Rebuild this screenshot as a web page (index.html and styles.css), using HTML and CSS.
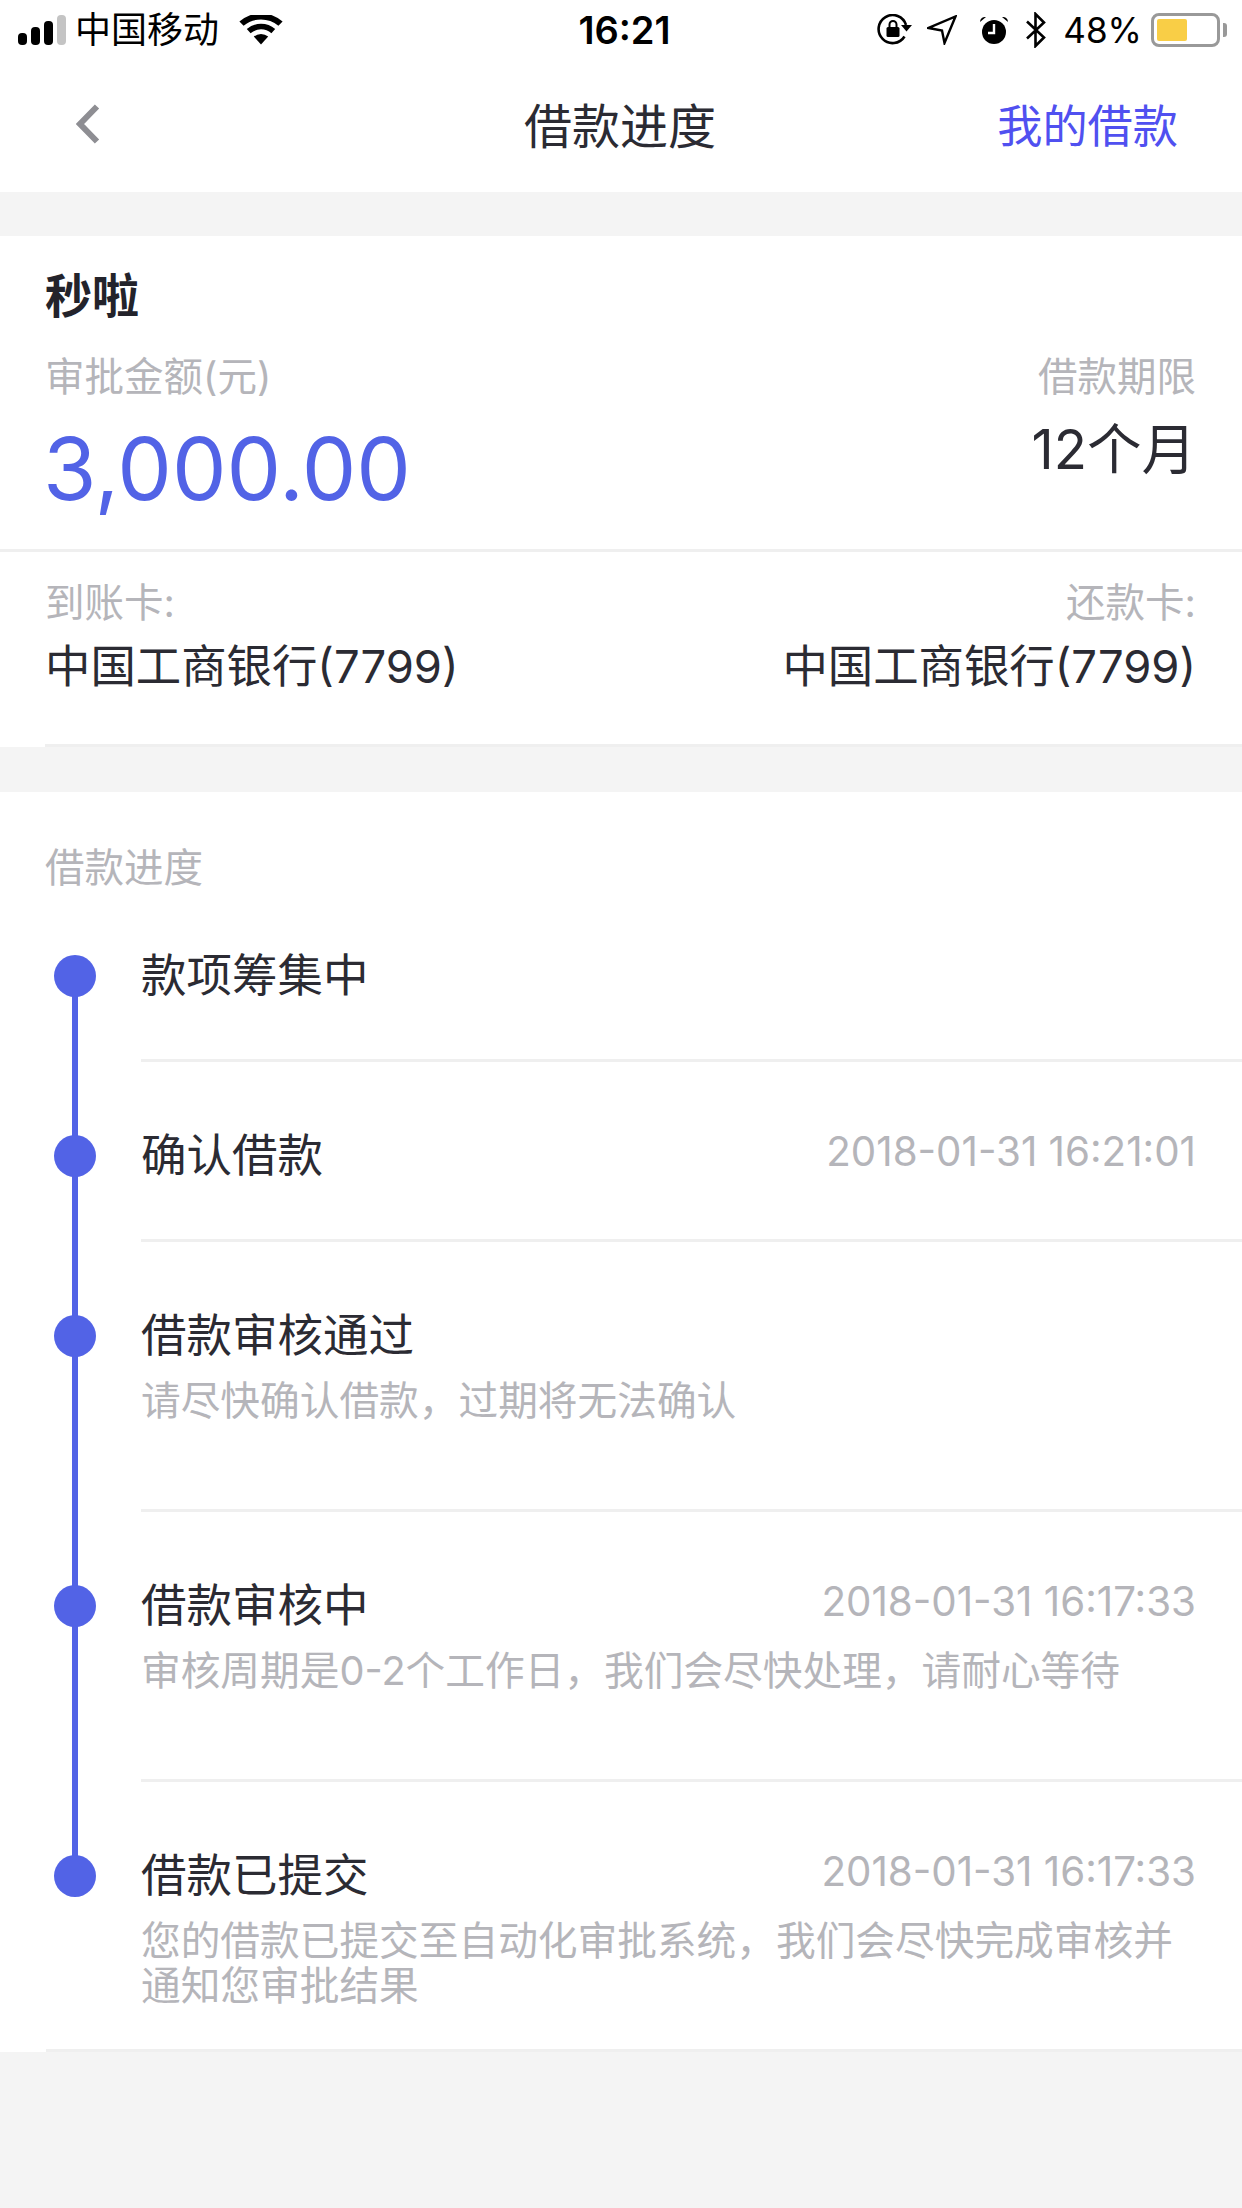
FILE: index.html
```html
<!DOCTYPE html>
<html lang="zh-CN">
<head>
<meta charset="utf-8">
<title>借款进度</title>
<link rel="stylesheet" href="styles.css">
</head>
<body>
<div class="page">
  <header class="top">
    <div class="status">
      <div class="status-left">
        <svg class="ic-signal" width="48" height="30" viewBox="0 0 48 30"><rect x="0" y="18" width="9" height="12" rx="4" fill="#000"/><rect x="13" y="12" width="9" height="18" rx="4" fill="#000"/><rect x="26" y="6" width="9" height="24" rx="4" fill="#000"/><rect x="39" y="0" width="9" height="30" rx="4" fill="#c4c4c4"/></svg>
        <span class="carrier">中国移动</span>
        <svg class="ic-wifi" width="44" height="30" viewBox="0 0 44 30"><path d="M22 29.5L14.8 21.6a11 11 0 0 1 14.4 0z" fill="#000"/><path d="M11.6 18.2L7.8 14a22 22 0 0 1 28.4 0l-3.8 4.2a16 16 0 0 0-20.8 0z" fill="#000"/><path d="M4.6 10.8L.4 6.4a33 33 0 0 1 43.2 0l-4.2 4.4a27 27 0 0 0-34.8 0z" fill="#000"/></svg>
      </div>
      <div class="clock">16:21</div>
      <div class="status-right">
        <svg class="ic" width="36" height="32" viewBox="0 0 36 32"><path d="M27.5 22.5A14 14 0 1 1 29 11" fill="none" stroke="#000" stroke-width="2.6"/><path d="M24 11h11l-5.500 6.500z" fill="#000"/><rect x="9.500" y="13" width="13" height="10" rx="1.500" fill="#000"/><path d="M12.500 13v-2.500a3.500 3.500 0 0 1 7 0V13" fill="none" stroke="#000" stroke-width="2"/></svg>
        <svg class="ic ic-gap1" width="30" height="30" viewBox="0 0 30 30"><path d="M28.500 1.500L17.500 28l-2.500-12.500L1.500 13z" fill="none" stroke="#000" stroke-width="2.400" stroke-linejoin="miter"/></svg>
        <svg class="ic ic-gap2" width="30" height="30" viewBox="0 0 30 30"><circle cx="15" cy="17" r="12" fill="#000"/><path d="M15 9v9H9" fill="none" stroke="#fff" stroke-width="2.400"/><path d="M1 7a5 5 0 0 1 6-5zM29 7a5 5 0 0 0-6-5z" fill="#000"/></svg>
        <svg class="ic ic-gap3" width="22" height="36" viewBox="0 0 22 36"><path d="M2 9.500L19 25.500 10.500 34V2L19 10.500 2 26.500" fill="none" stroke="#000" stroke-width="2.600"/></svg>
        <span class="pct">48%</span>
        <div class="battery"><div class="battery-fill"></div></div>
        <div class="battery-nub"></div>
      </div>
    </div>
    <nav class="nav">
      <svg class="back" width="24" height="40" viewBox="0 0 24 40"><path d="M21 2.500L4 20l17 17.500" fill="none" stroke="#8e8e93" stroke-width="6"/></svg>
      <h1 class="nav-title">借款进度</h1>
      <a class="nav-link">我的借款</a>
    </nav>
  </header>

  <section class="card card-summary">
    <div class="summary-main">
      <h2 class="product">秒啦</h2>
      <div class="split">
        <div>
          <div class="label">审批金额(元)</div>
          <div class="amount">3,000.00</div>
        </div>
        <div class="align-end">
          <div class="label">借款期限</div>
          <div class="term">12个月</div>
        </div>
      </div>
    </div>
    <div class="summary-cards">
      <div class="split">
        <div>
          <div class="label">到账卡:</div>
          <div class="bank">中国工商银行(7799)</div>
        </div>
        <div class="align-end">
          <div class="label">还款卡:</div>
          <div class="bank">中国工商银行(7799)</div>
        </div>
      </div>
    </div>
  </section>

  <section class="card card-progress">
    <div class="label heading">借款进度</div>
    <ol class="steps">
      <li class="step step-s">
        <div class="step-body">
          <div class="step-head"><span class="step-title">款项筹集中</span></div>
        </div>
      </li>
      <li class="step step-s">
        <div class="step-body">
          <div class="step-head"><span class="step-title">确认借款</span><span class="step-time">2018-01-31 16:21:01</span></div>
        </div>
      </li>
      <li class="step step-l">
        <div class="step-body">
          <div class="step-head"><span class="step-title">借款审核通过</span></div>
          <p class="step-note">请尽快确认借款，过期将无法确认</p>
        </div>
      </li>
      <li class="step step-l">
        <div class="step-body">
          <div class="step-head"><span class="step-title">借款审核中</span><span class="step-time">2018-01-31 16:17:33</span></div>
          <p class="step-note">审核周期是0-2个工作日，我们会尽快处理，请耐心等待</p>
        </div>
      </li>
      <li class="step step-l step-last">
        <div class="step-body">
          <div class="step-head"><span class="step-title">借款已提交</span><span class="step-time">2018-01-31 16:17:33</span></div>
          <p class="step-note">您的借款已提交至自动化审批系统，我们会尽快完成审核并通知您审批结果</p>
        </div>
      </li>
    </ol>
  </section>
</div>
</body>
</html>
```
FILE: styles.css
```css
* { box-sizing: border-box; }
html, body { margin: 0; padding: 0; }
body {
  width: 1242px;
  height: 2208px;
  background: #f4f4f4;
  font-family: Inter, "Noto Sans CJK SC", sans-serif;
  color: #2b2b33;
  overflow: hidden;
}
h1, h2, p, ol { margin: 0; padding: 0; font-weight: 400; }
ol { list-style: none; }

.top { background: #fff; height: 192px; }

.status {
  height: 60px;
  padding: 0 15px 0 18px;
  display: grid;
  grid-template-columns: 1fr auto 1fr;
  align-items: center;
  color: #000;
}
.status-left { display: flex; align-items: center; }
.carrier { font-size: 36px; line-height: 60px; margin-left: 9px; }
.ic-wifi { margin-left: 20px; }
.clock { font-size: 38px; font-weight: 600; line-height: 60px; margin-left: 4px; }
.status-right { display: flex; align-items: center; justify-content: flex-end; }
.ic { display: block; }
.ic-gap1 { margin-left: 14px; }
.ic-gap2 { margin-left: 22px; }
.ic-gap3 { margin-left: 16px; }
.pct { font-size: 35px; line-height: 60px; margin-left: 16px; }
.battery {
  width: 69px;
  height: 34px;
  margin-left: 9px;
  border: 3px solid #999;
  border-radius: 8px;
  padding: 3px;
}
.battery-fill { width: 30px; height: 22px; background: #f9ce46; border-radius: 2px; }
.battery-nub { width: 4px; height: 14px; margin-left: 3px; background: #999; border-radius: 0 3px 3px 0; }

.nav {
  height: 132px;
  padding: 0 64px 0 62px;
  display: grid;
  grid-template-columns: 1fr auto 1fr;
  align-items: center;
}
.nav-title { font-size: 48px; line-height: 60px; color: #2b2b33; margin-top: 2px; }
.back { margin: -4px 0 0 14px; display: block; }
.nav-link { font-size: 45.2px; line-height: 60px; color: #5050f0; justify-self: end; margin-top: 2px; }

.card { background: #fff; }
.card-summary { margin-top: 44px; }
.summary-main { padding: 36px 46px 30px 45px; border-bottom: 3px solid #efefef; }
.product { font-size: 47px; line-height: 48px; font-weight: 700; color: #23232b; }
.split { display: flex; justify-content: space-between; }
.align-end { display: flex; flex-direction: column; align-items: flex-end; }
.summary-main .split { margin-top: 33px; }
.label { font-size: 39.5px; line-height: 48px; color: #b5b5ba; }
.amount { font-size: 86.6px; line-height: 100px; margin: 18px 0 0 -2px; color: #5263e6; }
.term { font-size: 54.5px; line-height: 60px; margin-top: 18px; color: #2b2b33; }

.summary-cards {
  margin-left: 45px;
  padding: 27px 46px 47px 0;
  border-bottom: 3px solid #efefef;
}
.bank { font-size: 45.4px; line-height: 60px; margin-top: 10px; color: #2b2b33; }

.card-progress { margin-top: 45px; }
.heading { height: 90px; padding: 52px 0 0 45px; overflow: visible; }

.step { position: relative; padding-left: 141px; }
.step-s { height: 180px; }
.step-l { height: 270px; }
.step::before {
  content: "";
  position: absolute;
  left: 54px;
  top: 73px;
  width: 42px;
  height: 42px;
  border-radius: 50%;
  background: #5263e6;
  z-index: 1;
}
.step::after {
  content: "";
  position: absolute;
  left: 72px;
  top: 94px;
  width: 6px;
  height: 100%;
  background: #5263e6;
}
.step-last::after { display: none; }
.step-body {
  height: 100%;
  padding: 64px 46px 0 0;
  border-bottom: 3px solid #efefef;
}
.step-last { padding-left: 46px; }
.step-last .step-body { padding-left: 95px; }
.step-head { display: flex; justify-content: space-between; align-items: flex-start; }
.step-title { font-size: 45.5px; line-height: 60px; }
.step-time { font-size: 40.3px; line-height: 52px; color: #b5b5ba; }
.step-note { font-size: 39.7px; line-height: 45px; margin-top: 13px; color: #b5b5ba; }
```
